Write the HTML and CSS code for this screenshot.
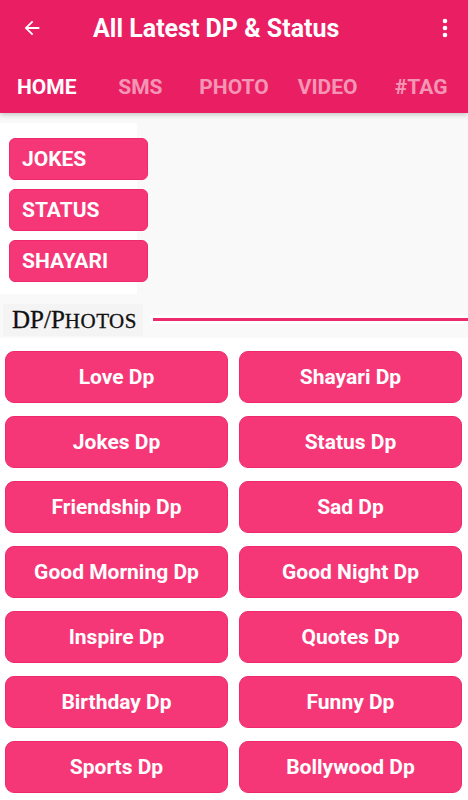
FILE: index.html
```html
<!DOCTYPE html>
<html lang="en">
<head>
    <meta charset="UTF-8">
    <meta name="viewport" content="width=device-width, initial-scale=1.0">
    <title>All Latest DP &amp; Status</title>
    <link rel="stylesheet" href="styles.css">
</head>
<body>
    <div class="header">
        <div class="toolbar">
            <svg class="back" width="22" height="22" viewBox="0 0 24 24">
                <path d="M20 11H7.83l5.59-5.59L12 4l-8 8 8 8 1.41-1.41L7.83 13H20v-2z" fill="#fff"/>
            </svg>
            <h1 class="title">All Latest DP &amp; Status</h1>
            <svg class="menu" width="6" height="20" viewBox="0 0 6 20">
                <circle cx="3" cy="3" r="2.3" fill="#fff"/>
                <circle cx="3" cy="10" r="2.3" fill="#fff"/>
                <circle cx="3" cy="17" r="2.3" fill="#fff"/>
            </svg>
        </div>
        <div class="tabs">
            <div class="tab active">HOME</div>
            <div class="tab">SMS</div>
            <div class="tab">PHOTO</div>
            <div class="tab">VIDEO</div>
            <div class="tab">#TAG</div>
        </div>
    </div>

    <div class="top">
        <div class="side">
            <div class="side-btn">JOKES</div>
            <div class="side-btn">STATUS</div>
            <div class="side-btn">SHAYARI</div>
        </div>
    </div>

    <div class="section">
        <div class="section-label">DP/P<span class="small">HOTOS</span></div>
        <div class="section-line"></div>
    </div>

    <div class="grid">
        <div class="grid-btn">Love Dp</div>
        <div class="grid-btn">Shayari Dp</div>
        <div class="grid-btn">Jokes Dp</div>
        <div class="grid-btn">Status Dp</div>
        <div class="grid-btn">Friendship Dp</div>
        <div class="grid-btn">Sad Dp</div>
        <div class="grid-btn">Good Morning Dp</div>
        <div class="grid-btn">Good Night Dp</div>
        <div class="grid-btn">Inspire Dp</div>
        <div class="grid-btn">Quotes Dp</div>
        <div class="grid-btn">Birthday Dp</div>
        <div class="grid-btn">Funny Dp</div>
        <div class="grid-btn">Sports Dp</div>
        <div class="grid-btn">Bollywood Dp</div>
    </div>
</body>
</html>
```

FILE: styles.css
```css
body {
    margin: 0;
    font-family: Roboto, "Liberation Sans", Arial, sans-serif;
    background-color: #fff;
    overflow: hidden;
}
.header {
    background-color: #e91e63;
    height: 113px;
    box-shadow: 0 2px 5px rgba(0, 0, 0, 0.2);
    position: relative;
    z-index: 1;
}
.toolbar {
    height: 56px;
    display: flex;
    align-items: center;
    padding: 0 20px 0 21px;
}
.back {
    flex: none;
}
.title {
    flex: 1;
    margin: 0 0 0 50px;
    color: #fff;
    font-size: 25px;
    font-weight: bold;
}
.menu {
    flex: none;
}
.tabs {
    display: flex;
    height: 57px;
    align-items: center;
}
.tab {
    flex: 1;
    text-align: center;
    color: rgba(255, 255, 255, 0.55);
    font-size: 21px;
    font-weight: bold;
    padding-top: 4px;
}
.tab.active {
    color: #fff;
}
.top {
    background-color: #f9f9f9;
    padding-top: 10px;
}
.side {
    width: 137px;
    background-color: #fff;
    padding: 15px 0 12px 9px;
    box-sizing: border-box;
    display: flex;
    flex-direction: column;
    gap: 9px;
}
.side-btn {
    width: 139px;
    height: 42px;
    box-sizing: border-box;
    background-color: #f63777;
    border: 1px solid #ee2a6c;
    border-radius: 6px;
    color: #fff;
    font-size: 21px;
    font-weight: bold;
    padding-left: 12px;
    display: flex;
    align-items: center;
}
.section {
    background-color: #f9f9f9;
    display: flex;
    align-items: center;
    height: 44px;
    padding-top: 7px;
    box-sizing: border-box;
}
.section-label {
    width: 140px;
    box-sizing: border-box;
    background-color: #f4f4f4;
    margin-left: 3px;
    padding: 1px 0 0 9px;
    font-family: "Liberation Serif", "Times New Roman", serif;
    font-size: 25px;
    line-height: 29px;
    color: #111;
    -webkit-text-stroke: 0.3px #111;
}
.section-label .small {
    font-size: 21px;
    letter-spacing: 0.5px;
}
.section-line {
    flex: 1;
    height: 3px;
    background-color: #ec2a6c;
    margin-left: 10px;
    box-shadow: 0 0 0 3px #fff;
}
.grid {
    display: grid;
    grid-template-columns: 1fr 1fr;
    column-gap: 11px;
    row-gap: 13px;
    padding: 13px 6px 0 5px;
}
.grid-btn {
    height: 52px;
    box-sizing: border-box;
    background-color: #f63777;
    border: 1px solid #ee2a6c;
    border-radius: 9px;
    color: #fff;
    font-size: 21px;
    font-weight: bold;
    display: flex;
    align-items: center;
    justify-content: center;
}
```
